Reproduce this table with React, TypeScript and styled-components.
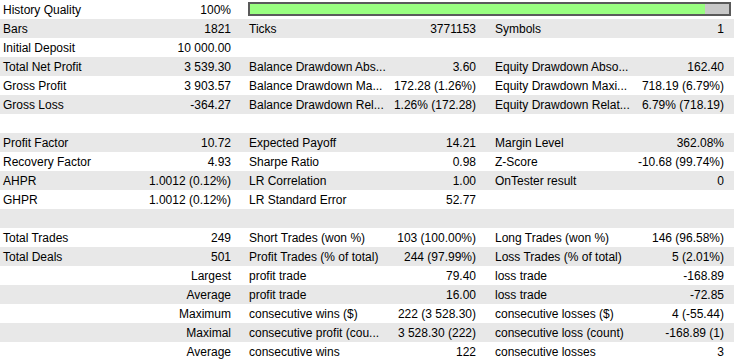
import { Fragment } from 'react'
import styled, { createGlobalStyle } from 'styled-components'

const GlobalStyle = createGlobalStyle`
  html, body {
    margin: 0;
    padding: 0;
    background: #ffffff;
  }
  body {
    font-family: 'Liberation Sans', Arial, sans-serif;
    font-size: 12px;
    color: #000000;
  }
`

const Report = styled.div`
  width: 734px;
  display: flex;
  flex-direction: column;
`

const Row = styled.div<{ $shaded: boolean }>`
  display: grid;
  grid-template-columns: 140px 106px 140px 106px 140px 102px;
  height: 19px;
  align-items: center;
  background: ${(p) => (p.$shaded ? '#e8e8e8' : '#ffffff')};
`

const Label = styled.div`
  padding-left: 3px;
  white-space: nowrap;
  overflow: hidden;
`

const Value = styled.div<{ $padRight: number }>`
  padding-right: ${(p) => p.$padRight}px;
  text-align: right;
  white-space: nowrap;
`

const QualityBar = styled.div`
  grid-column: 3 / 7;
  height: 14px;
  margin: 0 3px 1px 2px;
  box-sizing: border-box;
  border: 2px solid #5a5a5a;
  background: #c8c8c8;
  display: flex;
`

const QualityFill = styled.div`
  height: 100%;
  background: #99fe80;
`

// value column right paddings for the three label/value pairs
const pads = [15, 16, 10]

type Line = string[]

const rows: Line[] = [
  ['History Quality', '100%'],
  ['Bars', '1821', 'Ticks', '3771153', 'Symbols', '1'],
  ['Initial Deposit', '10 000.00', '', '', '', ''],
  ['Total Net Profit', '3 539.30', 'Balance Drawdown Abs...', '3.60', 'Equity Drawdown Abso...', '162.40'],
  ['Gross Profit', '3 903.57', 'Balance Drawdown Ma...', '172.28 (1.26%)', 'Equity Drawdown Maxi...', '718.19 (6.79%)'],
  ['Gross Loss', '-364.27', 'Balance Drawdown Rel...', '1.26% (172.28)', 'Equity Drawdown Relat...', '6.79% (718.19)'],
  ['', '', '', '', '', ''],
  ['Profit Factor', '10.72', 'Expected Payoff', '14.21', 'Margin Level', '362.08%'],
  ['Recovery Factor', '4.93', 'Sharpe Ratio', '0.98', 'Z-Score', '-10.68 (99.74%)'],
  ['AHPR', '1.0012 (0.12%)', 'LR Correlation', '1.00', 'OnTester result', '0'],
  ['GHPR', '1.0012 (0.12%)', 'LR Standard Error', '52.77', '', ''],
  ['', '', '', '', '', ''],
  ['Total Trades', '249', 'Short Trades (won %)', '103 (100.00%)', 'Long Trades (won %)', '146 (96.58%)'],
  ['Total Deals', '501', 'Profit Trades (% of total)', '244 (97.99%)', 'Loss Trades (% of total)', '5 (2.01%)'],
  ['', 'Largest', 'profit trade', '79.40', 'loss trade', '-168.89'],
  ['', 'Average', 'profit trade', '16.00', 'loss trade', '-72.85'],
  ['', 'Maximum', 'consecutive wins ($)', '222 (3 528.30)', 'consecutive losses ($)', '4 (-55.44)'],
  ['', 'Maximal', 'consecutive profit (cou...', '3 528.30 (222)', 'consecutive loss (count)', '-168.89 (1)'],
  ['', 'Average', 'consecutive wins', '122', 'consecutive losses', '3'],
]

const quality = 95

export default function App() {
  return (
    <>
      <GlobalStyle />
      <Report>
        {rows.map((line, i) => (
          <Row key={i} $shaded={i % 2 === 1}>
            {i === 0 ? (
              <>
                <Label>{line[0]}</Label>
                <Value $padRight={pads[0]}>{line[1]}</Value>
                <QualityBar>
                  <QualityFill style={{ width: `${quality}%` }} />
                </QualityBar>
              </>
            ) : (
              [0, 1, 2].map((k) => (
                <Fragment key={k}>
                  <Label>{line[k * 2]}</Label>
                  <Value $padRight={pads[k]}>{line[k * 2 + 1]}</Value>
                </Fragment>
              ))
            )}
          </Row>
        ))}
      </Report>
    </>
  )
}
